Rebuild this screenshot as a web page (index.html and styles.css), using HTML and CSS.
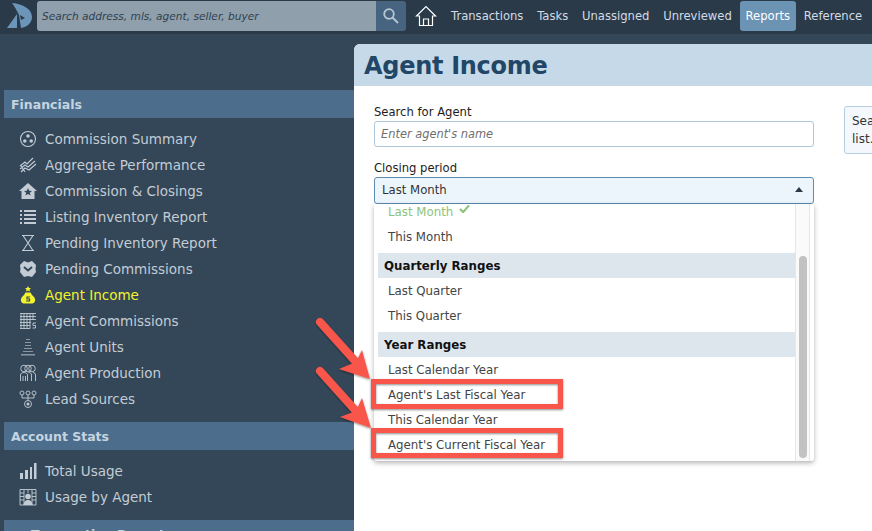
FILE: index.html
```html
<!DOCTYPE html>
<html lang="en">
<head>
<meta charset="utf-8">
<title>Agent Income</title>
<link rel="stylesheet" href="styles.css">
</head>
<body>
<header class="topbar">
  <svg class="logo" viewBox="0 0 26 26" aria-hidden="true">
    <path class="logo-blue" d="M5 0 C16 1 25 6 25 14 C25 20 20 24 14 25 L12 12 C10 8 8 4 5 0Z"/>
    <path class="logo-blue" d="M10 11 L10 25 L0 25Z"/>
    <path class="logo-eye" d="M13 12 L18 15 L14 17Z"/>
  </svg>
  <div class="search">
    <div class="search-text">Search address, mls, agent, seller, buyer</div>
    <div class="search-btn">
      <svg viewBox="0 0 18 18" class="search-icon" aria-hidden="true"><circle cx="7" cy="7" r="4.8"/><path d="M10.5 10.5 L16 16"/></svg>
    </div>
  </div>
  <svg class="home" viewBox="0 0 22 22" aria-hidden="true"><path d="M1.5 11 L11 1.5 L20.5 11 H17.5 V20.5 H4.500 V11Z M8.500 20.500 V14 H13.500 V20.500"/></svg>
  <nav class="nav">
    <span class="tab">Transactions</span>
    <span class="tab">Tasks</span>
    <span class="tab">Unassigned</span>
    <span class="tab">Unreviewed</span>
    <span class="tab tab-active">Reports</span>
    <span class="tab">Reference</span>
  </nav>
</header>

<div class="layout">
  <aside class="sidebar">
    <h2 class="side-head">Financials</h2>
    <ul class="side-list">
      <li class="side-item"><svg class="ic" viewBox="0 0 18 18"><circle class="ol" cx="9" cy="9" r="7.500"/><circle cx="9" cy="6" r="1.800"/><circle cx="5.800" cy="11" r="1.800"/><circle cx="12.200" cy="11" r="1.800"/></svg>Commission Summary</li>
      <li class="side-item"><svg class="ic" viewBox="0 0 18 18"><path class="ol" d="M1 10 L6 6 L8 8 L14 2 M1 13 L6 9 L9 11 L16 5 M2 16 L6 12 L10 14 L17 8 M2 10 L6 16"/></svg>Aggregate Performance</li>
      <li class="side-item"><svg class="ic" viewBox="0 0 18 18"><path d="M9 1 L18 9 H15.500 V17 H2.500 V9 H0Z"/><path class="cut" d="M9 6 L10.200 8.800 L13 9 L10.800 10.800 L11.600 13.500 L9 12 L6.400 13.500 L7.200 10.800 L5 9 L7.800 8.800Z"/></svg>Commission &amp; Closings</li>
      <li class="side-item"><svg class="ic" viewBox="0 0 18 18"><path d="M1 2h2v2H1zM5 2h12v2H5zM1 6h2v2H1zM5 6h12v2H5zM1 10h2v2H1zM5 10h12v2H5zM1 14h2v2H1zM5 14h12v2H5z"/></svg>Listing Inventory Report</li>
      <li class="side-item"><svg class="ic" viewBox="0 0 18 18"><path class="ol" d="M3 1.500 H15 M3 16.500 H15 M4 1.500 L14 16.500 M14 1.500 L4 16.500"/></svg>Pending Inventory Report</li>
      <li class="side-item"><svg class="ic" viewBox="0 0 18 18"><path d="M5 1 L9 2.500 L13 1 L17 5 L16.500 9 L17 12 L13 17 L9 16 L5 17 L1 12 L1.500 9 L1 5Z"/><path class="cut-line" d="M5 7 L9 10.500 L13 7"/></svg>Pending Commissions</li>
      <li class="side-item side-active"><svg class="ic" viewBox="0 0 18 18"><path d="M9 0 L10 2 L12 2 L10.500 3.500 L11 5.500 L9 4.500 L7 5.500 L7.500 3.500 L6 2 L8 2Z"/><path d="M6.500 6.500 H11.500 L13 9 C15.500 11 16.500 13 16 15 C15.500 17 14 17.500 12 17.500 H6 C4 17.500 2.500 17 2 15 C1.500 13 2.500 11 5 9Z"/><path class="money" d="M11 11 H8 V13 H10.500 V15 H7"/></svg>Agent Income</li>
      <li class="side-item"><svg class="ic" viewBox="0 0 18 18"><path class="thin" d="M1 1.500 H17 M1 4.500 H17 M1 7.500 H17 M1 10.500 H12 M1 13.500 H11 M1 16.500 H11 M2 1.500 V16.500 M5 1.500 V16.500 M8 1.500 V16.500 M11 1.500 V16.500 M14 1.500 V8"/><path class="thin" d="M17 11 H14 V13.500 H16.500 V16 H13.500"/></svg>Agent Commissions</li>
      <li class="side-item"><svg class="ic dim" viewBox="0 0 18 18"><path d="M7 1h4v1H7zM6 4h6v1H6zM6 7h6v1H6zM5 10h8v1H5zM4 13h10v1H4zM2 16h14v1.500H2z"/></svg>Agent Units</li>
      <li class="side-item"><svg class="ic" viewBox="0 0 18 18"><circle class="thin" cx="5" cy="4.500" r="3.300"/><circle class="thin" cx="9" cy="4.500" r="3.300"/><circle class="thin" cx="13" cy="4.500" r="3.300"/><path class="thin" d="M1.500 17 V11 C1.500 9.500 3 8.500 5 8.500 C7 8.500 8.500 9.500 8.500 11 V17 M4 17 V12 M6.500 17 V12 M9.500 8.500 C11.500 8.500 12.500 9.500 12.500 11 V17 M14 8.500 C15.500 8.800 16.500 9.500 16.500 11 V17"/></svg>Agent Production</li>
      <li class="side-item"><svg class="ic" viewBox="0 0 18 18"><circle class="thin" cx="3" cy="3" r="2"/><circle class="thin" cx="9" cy="3" r="2"/><circle class="thin" cx="15" cy="3" r="2"/><path class="thin" d="M3 5 V8 H15 V5 M9 5 V11"/><circle class="thin" cx="9" cy="14" r="3.500"/><circle cx="9" cy="14" r="1.500"/></svg>Lead Sources</li>
    </ul>
    <h2 class="side-head">Account Stats</h2>
    <ul class="side-list">
      <li class="side-item"><svg class="ic" viewBox="0 0 18 18"><path d="M1 11h3v6H1zM6 8h3v9H6zM11 5h2v12h-2zM15 1h2.500v16H15z"/></svg>Total Usage</li>
      <li class="side-item"><svg class="ic" viewBox="0 0 18 18"><path class="thin" d="M1 1.500 H17 V17 H1Z M1 5 H5 M1 8.500 H5 M1 12 H5 M13 5 H17 M13 8.500 H17 M13 12 H17 M5 1.500 V17 M13 1.500 V17 M9 1.500 V5"/><circle cx="9" cy="8.500" r="2.800"/><path d="M4.500 17 C5 13 7 12 9 12 C11 12 13 13 13.500 17Z"/></svg>Usage by Agent</li>
    </ul>
    <h2 class="side-head side-head-sub">Transaction Reports</h2>
  </aside>

  <main class="panel">
    <h1 class="panel-title">Agent Income</h1>
    <div class="panel-body">
      <form class="form">
        <div class="field">
          <div class="label">Search for Agent</div>
          <div class="input">Enter agent's name</div>
        </div>
        <div class="field">
          <div class="label">Closing period</div>
          <div class="select">Last Month<span class="caret"></span></div>
        </div>
      </form>
      <aside class="tip">Search for an agent by name<br>list.</aside>
    </div>
  </main>
</div>

<div class="menu">
  <div class="menu-list">
    <div class="opt opt-selected">Last Month <svg class="check" viewBox="0 0 12 10" aria-hidden="true"><path d="M1 5.500 L4.500 9 L11 1.500"/></svg></div>
    <div class="opt">This Month</div>
    <div class="grp">Quarterly Ranges</div>
    <div class="opt">Last Quarter</div>
    <div class="opt">This Quarter</div>
    <div class="grp">Year Ranges</div>
    <div class="opt">Last Calendar Year</div>
    <div class="opt">Agent's Last Fiscal Year</div>
    <div class="opt">This Calendar Year</div>
    <div class="opt">Agent's Current Fiscal Year</div>
  </div>
  <div class="track"><div class="thumb"></div></div>
</div>

<svg class="annot" viewBox="0 0 872 531" aria-hidden="true">
  <defs>
    <filter id="sh" x="-20%" y="-20%" width="140%" height="140%"><feDropShadow dx="0" dy="1" stdDeviation="1.200" flood-color="#000" flood-opacity=".45"/></filter>
  </defs>
  <g class="mark" filter="url(#sh)">
    <rect class="box" x="373.500" y="381.500" width="187" height="25"/>
    <path class="shaft" d="M320 322 L356 362"/>
    <path class="head" d="M370 379 L362 350 L356 362 L339 369Z"/>
  </g>
  <g class="mark" filter="url(#sh)">
    <rect class="box" x="373.500" y="430.500" width="187" height="25"/>
    <path class="shaft" d="M320 371 L356 411"/>
    <path class="head" d="M371 428 L362 398 L356 411 L340 417Z"/>
  </g>
</svg>
</body>
</html>
```
FILE: styles.css
```css
* { box-sizing: border-box; }
html, body { margin: 0; padding: 0; height: 531px; overflow: hidden; }
body { position: relative; background: #344758; font-family: "DejaVu Sans", sans-serif; }

.topbar { height: 34px; background: #2a3a49; display: flex; align-items: flex-start; }
.logo { width: 26px; height: 26px; margin: 3px 0 0 7px; flex: none; }
.logo-blue { fill: #6b96b9; }
.logo-eye { fill: #2a3a49; }
.search { width: 369px; height: 30px; margin: 1px 0 0 4px; display: flex; border-radius: 3px; overflow: hidden; flex: none; }
.search-text { flex: 1; background: #8f9fac; color: #2f3f4e; font-size: 10.600px; font-style: italic; line-height: 30px; padding-left: 5px; }
.search-btn { width: 30px; background: #466480; display: flex; align-items: center; justify-content: center; }
.search-icon { width: 18px; height: 18px; fill: none; stroke: #b9c7d3; stroke-width: 1.800; }
.home { width: 22px; height: 22px; margin: 5px 0 0 9px; fill: none; stroke: #fff; stroke-width: 1.200; flex: none; }
.nav { display: flex; margin-left: 8px; margin-top: 1px; }
.tab { height: 30px; line-height: 30px; padding: 0 6px; margin-right: 1.750px; color: #d3dce4; font-size: 11.600px; border-radius: 3px; }
.tab-active { background: #6b93b4; color: #fff; font-weight: normal; }

.layout { display: flex; height: 497px; }
.sidebar { width: 354px; flex: none; padding: 56px 0 0 4px; overflow: hidden; }
.side-head { margin: 0; height: 28px; line-height: 29px; background: #4c6e8c; color: #c6d4e0; font-size: 12.500px; font-weight: bold; padding-left: 7px; }
.side-head-sub { padding-left: 27px; }
.side-list { list-style: none; margin: 0; padding: 8px 0 10px 15px; }
.side-item { height: 26px; display: flex; align-items: center; gap: 8px; color: #c3ccd5; font-size: 13.500px; }
.side-active { color: #f2f22e; }
.ic { width: 18px; height: 18px; flex: none; fill: currentColor; }
.ic .ol { fill: none; stroke: currentColor; stroke-width: 1.100; }
.ic .thin { fill: none; stroke: currentColor; stroke-width: 0.900; }
.ic .cut { fill: #344758; }
.ic .cut-line { fill: none; stroke: #344758; stroke-width: 2; }
.ic .money { fill: none; stroke: #344758; stroke-width: 1.200; }
.dim { opacity: .6; }

.panel { flex: 1; margin-top: 10px; background: #fff; border-top-left-radius: 6px; overflow: hidden; }
.panel-title { margin: 0; height: 42px; line-height: 44px; background: #c6d9e8; color: #224766; font-size: 24px; letter-spacing: -0.300px; font-weight: bold; padding-left: 10px; }
.panel-body { display: flex; padding: 19px 0 0 20px; gap: 30px; }
.form { width: 440px; flex: none; }
.field { margin-bottom: 14px; }
.label { color: #1d1d1d; font-size: 11.600px; line-height: 15px; margin-bottom: 1px; }
.input { height: 26px; line-height: 24px; border: 1px solid #adc8dd; border-radius: 3px; padding-left: 6px; color: #6f6f6f; font-size: 11.400px; font-style: italic; }
.select { height: 27px; line-height: 24px; border: 1px solid #5e8bb0; border-radius: 3px; padding-left: 7px; background: #edf5fc; color: #333; font-size: 11.700px; position: relative; }
.caret { position: absolute; right: 10px; top: 9px; width: 0; height: 0; border-left: 4px solid transparent; border-right: 4px solid transparent; border-bottom: 5px solid #2a3a49; }
.tip { width: 300px; flex: none; height: 48px; margin-top: 1px; border: 1px solid #b5cfe3; border-radius: 3px; background: #f4f8fc; color: #333; font-size: 12px; line-height: 18px; padding: 5px 7px; }

.menu { position: absolute; left: 374px; top: 204px; width: 440px; height: 257px; background: #fff; box-shadow: 0 2px 5px rgba(0,0,0,.3); overflow: hidden; border-radius: 0 0 3px 3px; }
.menu-list { position: absolute; left: 4px; top: -5px; width: 417px; }
.opt { height: 25px; line-height: 25px; padding: 1px 0 0 10px; color: #444; font-size: 11.800px; }
.opt-selected { color: #8cc47c; }
.check { width: 11px; height: 9px; fill: none; stroke: #8cc47c; stroke-width: 2.400; margin-left: 2px; vertical-align: 3px; }
.grp { height: 25px; line-height: 25px; margin-top: 4px; padding: 1px 0 0 6px; background: #dee6ed; color: #111; font-size: 11.800px; font-weight: bold; }
.track { position: absolute; left: 421px; top: 0; width: 15px; height: 257px; background: #fafafa; border-left: 1px solid #e6e6e6; border-right: 1px solid #e6e6e6; }
.thumb { position: absolute; left: 3px; top: 52px; width: 8px; height: 202px; background: #c2c2c2; border-radius: 4px; }

.annot { position: absolute; left: 0; top: 0; width: 872px; height: 531px; pointer-events: none; }
.box { fill: none; stroke: #f9574b; stroke-width: 5; }
.shaft { stroke: #f9574b; stroke-width: 8; stroke-linecap: round; fill: none; }
.head { fill: #f9574b; }
```
